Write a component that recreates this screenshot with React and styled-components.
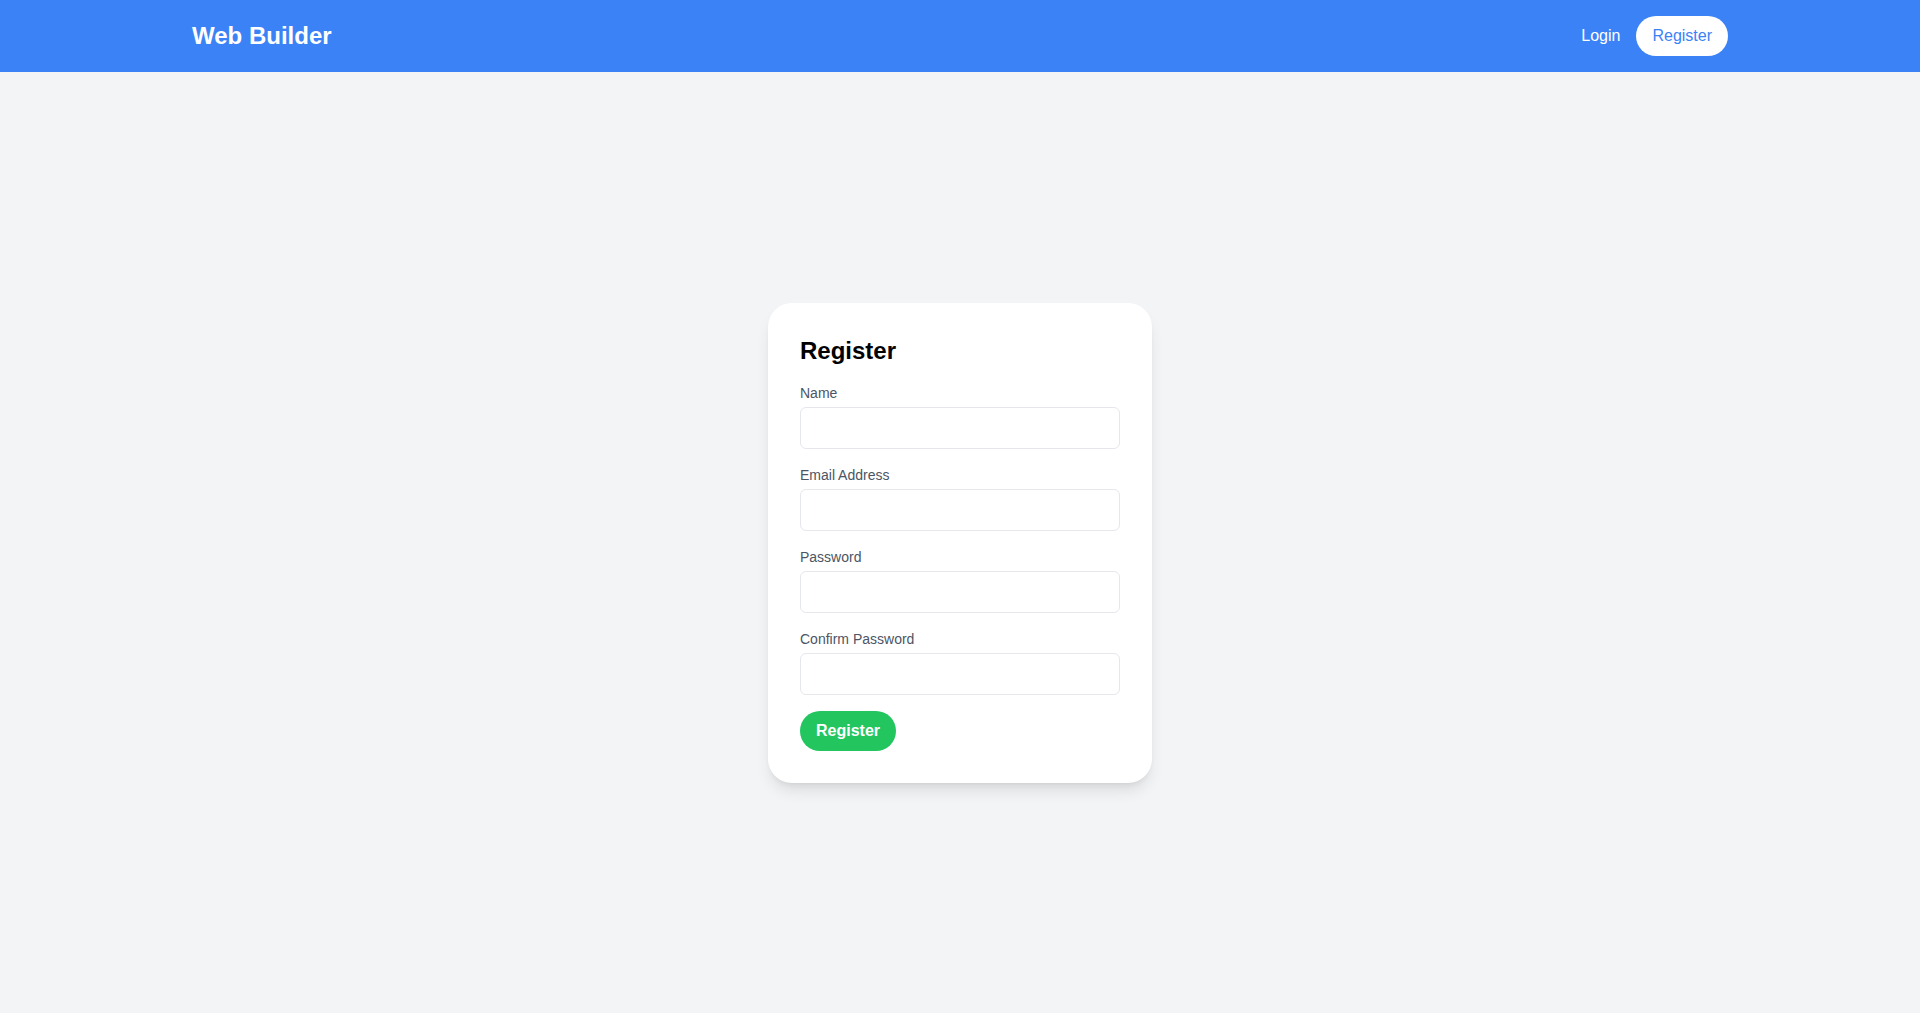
import React from 'react';
import styled, { createGlobalStyle } from 'styled-components';

/** Web Builder - Register page
 *  Header bar with nav, centered register card.
 */

const GlobalStyle = createGlobalStyle`
    * { box-sizing: border-box; }
    html, body {
        margin: 0;
        padding: 0;
        background-color: #f3f4f6;
        font-family: "Liberation Sans", Arial, sans-serif;
    }
`;

const Page = styled.div`
    min-height: 100vh;
    display: flex;
    flex-direction: column;
    background-color: #f3f4f6;
`;

const Header = styled.header`
    background-color: #3b82f6;
    height: 72px;
    flex-shrink: 0;
`;

const HeaderInner = styled.div`
    max-width: 1536px;
    height: 100%;
    margin: 0 auto;
    display: flex;
    align-items: center;
    justify-content: space-between;
`;

const Logo = styled.a`
    color: #fff;
    font-size: 24px;
    line-height: 32px;
    font-weight: 700;
    text-decoration: none;
`;

const Nav = styled.nav`
    display: flex;
    align-items: center;
    gap: 16px;
`;

const NavLink = styled.a`
    font-size: 16px;
    line-height: 24px;
    text-decoration: none;
    color: ${({ $pill }) => ($pill ? '#3b82f6' : '#fff')};
    background-color: ${({ $pill }) => ($pill ? '#fff' : 'transparent')};
    padding: ${({ $pill }) => ($pill ? '8px 16px' : '0')};
    border-radius: 9999px;
`;

const Main = styled.main`
    flex: 1;
    display: flex;
    align-items: center;
    justify-content: center;
`;

const Card = styled.form`
    width: 384px;
    background-color: #fff;
    border-radius: 24px;
    padding: 32px;
    box-shadow: 0 10px 15px -3px rgba(0, 0, 0, 0.1), 0 4px 6px -4px rgba(0, 0, 0, 0.1);
`;

const Title = styled.h2`
    margin: 0 0 16px;
    font-size: 24px;
    line-height: 32px;
    font-weight: 700;
    color: #000;
`;

const Field = styled.div`
    margin-bottom: 16px;
`;

const Label = styled.label`
    display: block;
    font-size: 14px;
    line-height: 20px;
    color: #4b5563;
    margin-bottom: 4px;
`;

const Input = styled.input`
    display: block;
    width: 100%;
    height: 42px;
    padding: 8px 12px;
    font-size: 16px;
    font-family: inherit;
    border: 1px solid #e5e7eb;
    border-radius: 6px;
    outline: none;
`;

const SubmitButton = styled.button`
    background-color: #22c55e;
    color: #fff;
    font-family: inherit;
    font-size: 16px;
    line-height: 24px;
    font-weight: 700;
    padding: 8px 16px;
    border: none;
    border-radius: 9999px;
    cursor: pointer;
`;

const fields = [
    { id: 'name', label: 'Name', type: 'text' },
    { id: 'email', label: 'Email Address', type: 'email' },
    { id: 'password', label: 'Password', type: 'password' },
    { id: 'confirm', label: 'Confirm Password', type: 'password' },
];

const App = () => {
    return (
        <Page>
            <GlobalStyle />
            <Header>
                <HeaderInner>
                    <Logo href="#">Web Builder</Logo>
                    <Nav>
                        <NavLink href="#">Login</NavLink>
                        <NavLink href="#" $pill>Register</NavLink>
                    </Nav>
                </HeaderInner>
            </Header>
            <Main>
                <Card onSubmit={(e) => e.preventDefault()}>
                    <Title>Register</Title>
                    {fields.map((f) => (
                        <Field key={f.id}>
                            <Label htmlFor={f.id}>{f.label}</Label>
                            <Input id={f.id} type={f.type} />
                        </Field>
                    ))}
                    <SubmitButton type="submit">Register</SubmitButton>
                </Card>
            </Main>
        </Page>
    );
};

export default App;
